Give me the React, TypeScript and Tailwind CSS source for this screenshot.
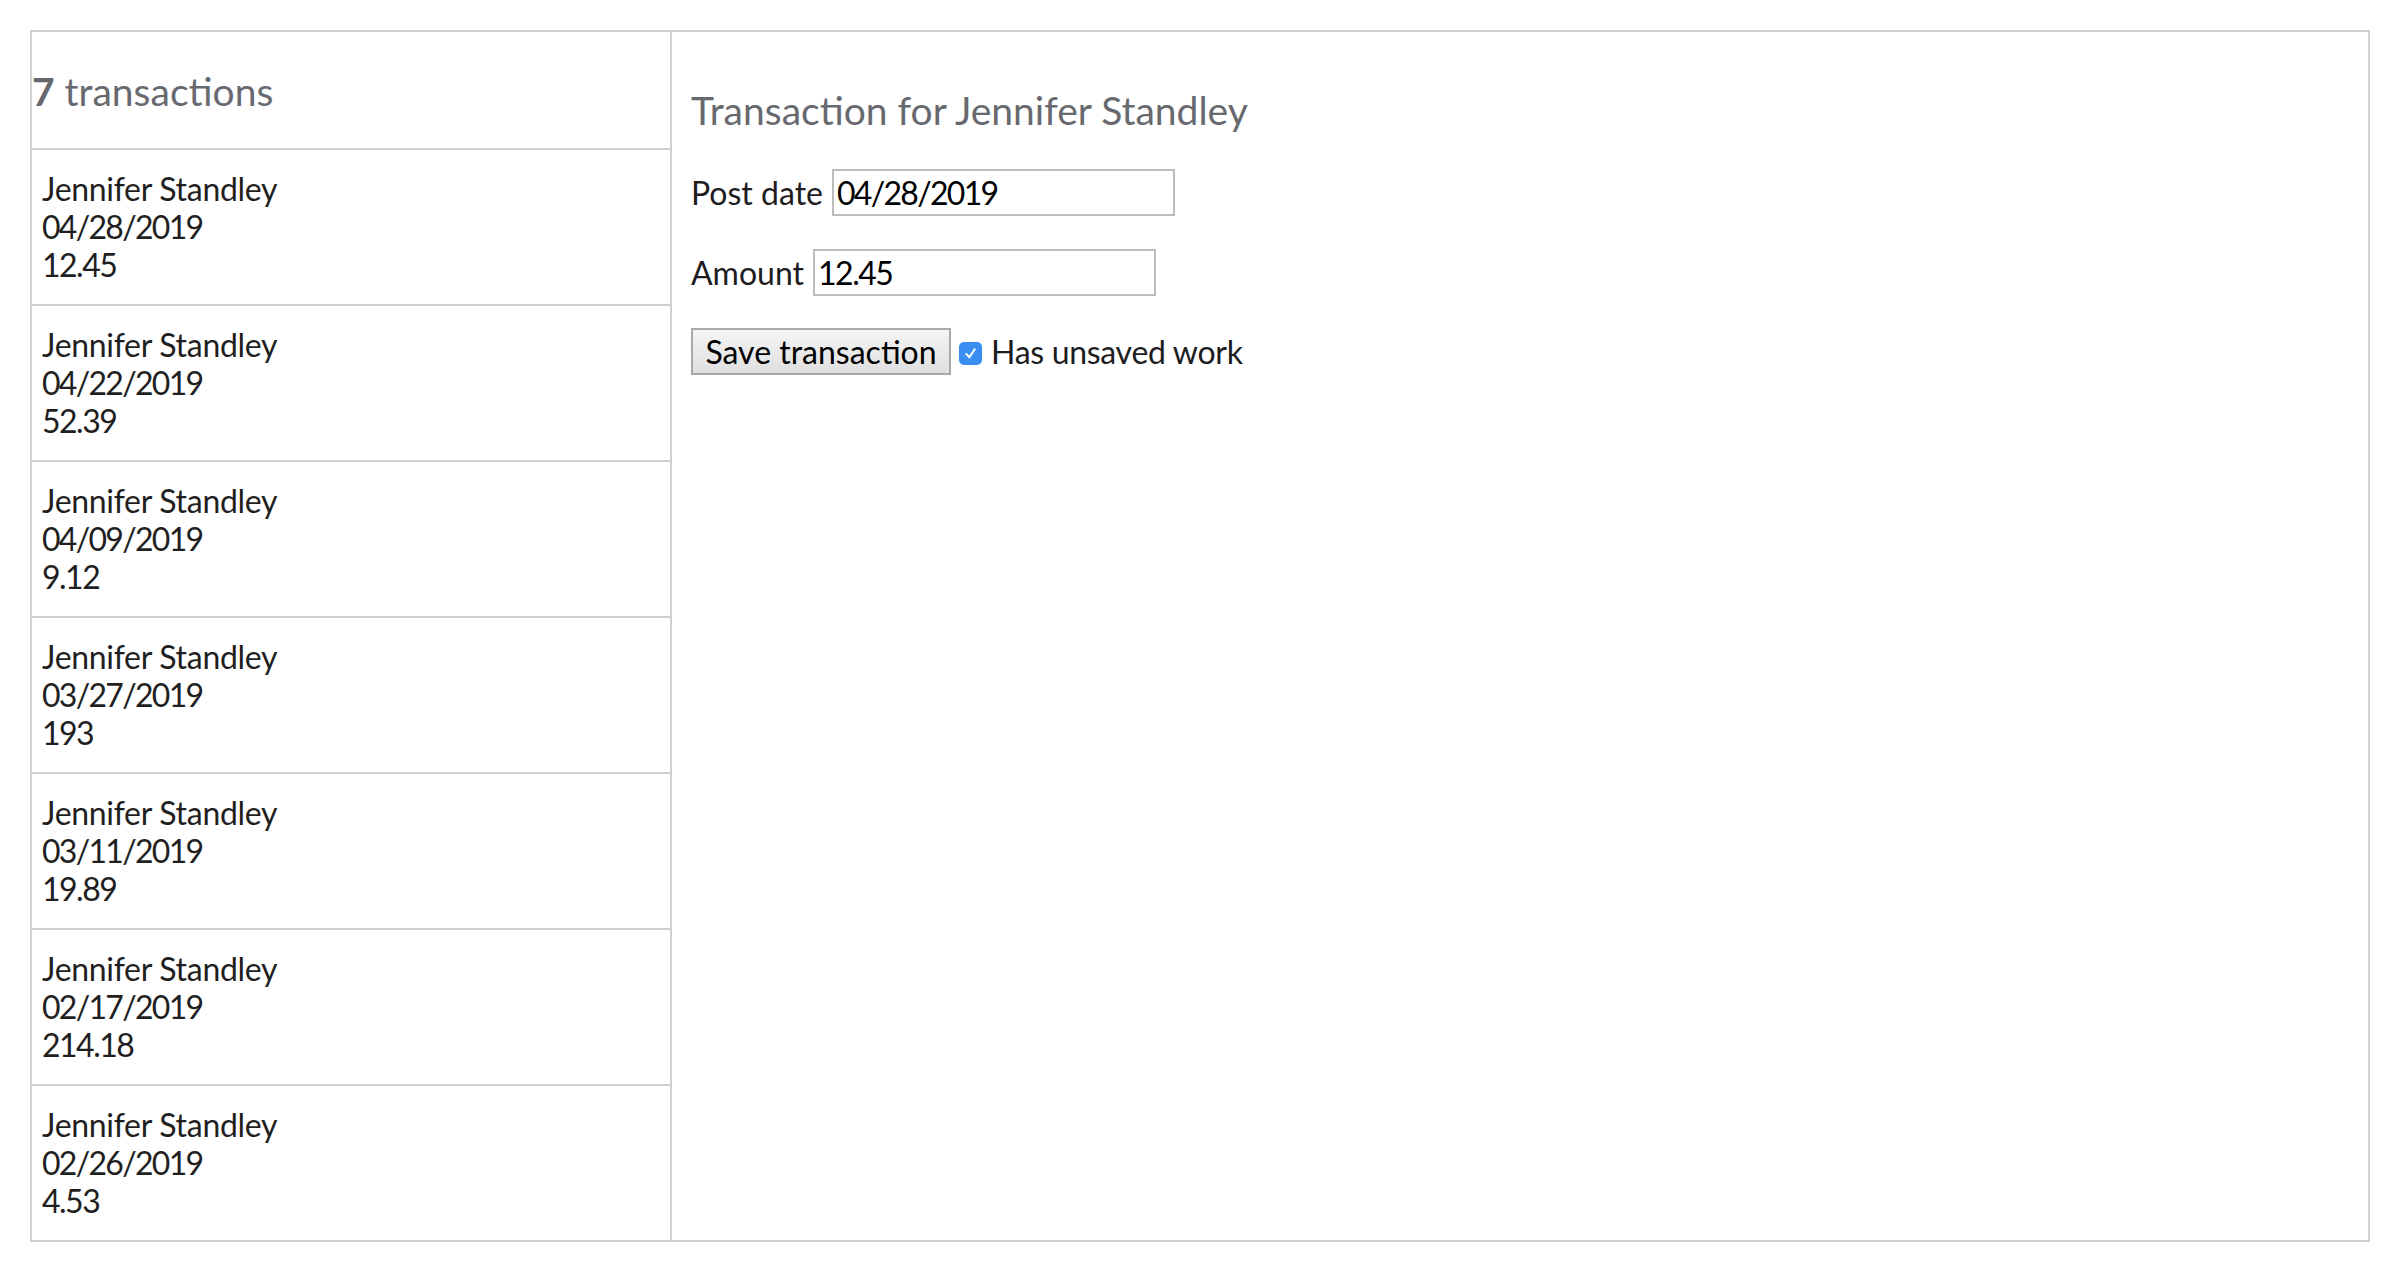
import React from "react";

const rows = [
  { name: "Jennifer Standley", date: "04/28/2019", amount: "12.45" },
  { name: "Jennifer Standley", date: "04/22/2019", amount: "52.39" },
  { name: "Jennifer Standley", date: "04/09/2019", amount: "9.12" },
  { name: "Jennifer Standley", date: "03/27/2019", amount: "193" },
  { name: "Jennifer Standley", date: "03/11/2019", amount: "19.89" },
  { name: "Jennifer Standley", date: "02/17/2019", amount: "214.18" },
  { name: "Jennifer Standley", date: "02/26/2019", amount: "4.53" },
];

export default function App() {
  return (
    <div
      className="p-[30px] bg-white min-h-[1272px] text-[#1d1d1f]"
      style={{ fontFamily: "Lato, 'Noto Sans', sans-serif" }}
    >
      <div className="flex border-2 border-[#cfcfd3]">
        <div className="w-[640px] shrink-0 border-r-2 border-[#cfcfd3] flex flex-col divide-y-2 divide-[#cfcfd3]">
          <div className="h-[118px] pt-[1px] flex items-center text-[39px] leading-[46px] text-[#67696f]">
            <span className="font-bold">7</span>
            <span>&nbsp;transactions</span>
          </div>
          {rows.map((r, i) => (
            <div
              key={i}
              className="h-[156px] pl-[10px] flex flex-col justify-center text-[32px] leading-[38px] text-[#1f1f22] last:h-[154px]"
            >
              <div className="tracking-[-0.3px]">{r.name}</div>
              <div className="tracking-[-1.7px]">{r.date}</div>
              <div className="tracking-[-1.5px]">{r.amount}</div>
            </div>
          ))}
        </div>
        <div className="flex-1 pl-[19px] pt-[55px]">
          <h3 className="text-[39px] leading-[46px] text-[#67696f]">
            Transaction for Jennifer Standley
          </h3>
          <div className="mt-[36px] flex flex-col text-[32px]">
            <div className="flex items-center h-[47px]">
              <span className="mr-[9px]">Post date</span>
              <div className="w-[343px] h-[47px] border-2 border-[#bcbcbc] pl-[3px] flex items-center text-black tracking-[-1.7px]">
                04/28/2019
              </div>
            </div>
            <div className="mt-[33px] flex items-center h-[47px]">
              <span className="mr-[9px]">Amount</span>
              <div className="w-[343px] h-[47px] border-2 border-[#bcbcbc] pl-[3px] flex items-center text-black tracking-[-1.5px]">
                12.45
              </div>
            </div>
            <div className="mt-[32px] flex items-center h-[47px]">
              <button className="w-[260px] h-[47px] border-2 border-[#a9a9a9] bg-gradient-to-b from-[#f5f5f5] to-[#dfdfdf] text-black text-[32px] leading-none flex items-center justify-center">
                Save transaction
              </button>
              <span className="ml-[8px] mt-[3px] w-[23px] h-[23px] rounded-[5px] bg-[#3b8ef1] flex items-center justify-center">
                <svg width="15" height="15" viewBox="0 0 16 16" fill="none">
                  <path
                    d="M3.5 8.5 L6.8 12 L12.5 3.5"
                    stroke="white"
                    strokeWidth="2.2"
                    strokeLinecap="round"
                    strokeLinejoin="round"
                  />
                </svg>
              </span>
              <span className="ml-[9px] tracking-[-0.3px]">Has unsaved work</span>
            </div>
          </div>
        </div>
      </div>
    </div>
  );
}
